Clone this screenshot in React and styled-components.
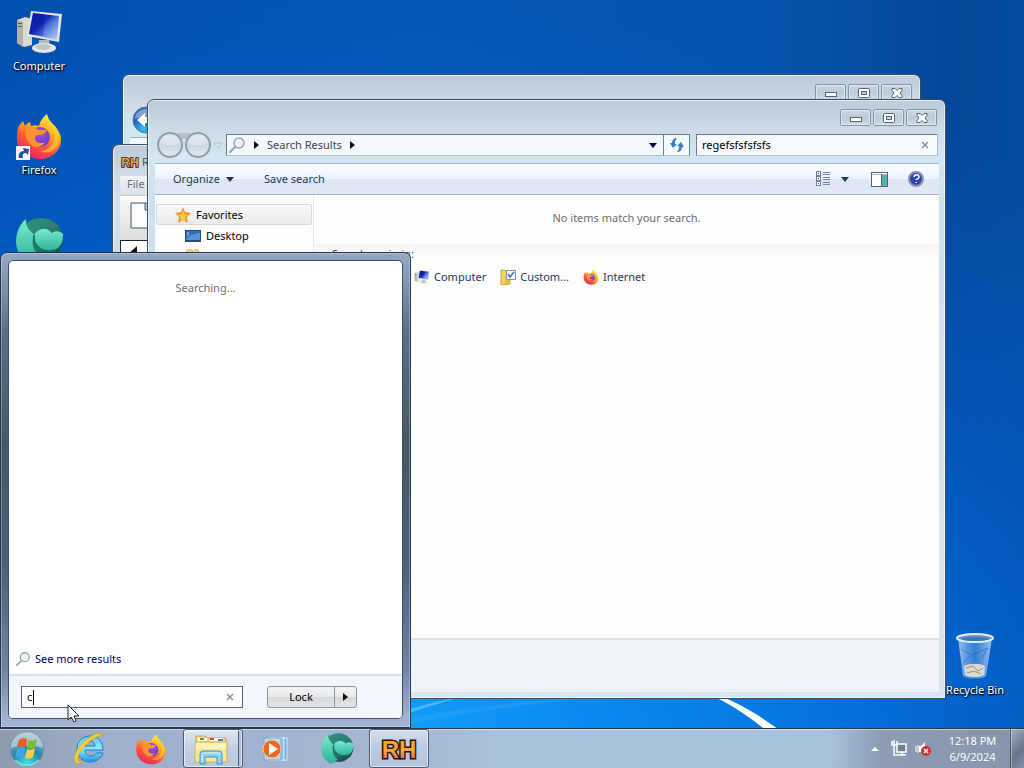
import { useState } from "react";
import styled, { createGlobalStyle } from "styled-components";

const App = () => {
  const [query, setQuery] = useState("regefsfsfsfsfs");
  const [startQuery, setStartQuery] = useState("c");

  return (
    <>
      <GlobalStyle />
      <Gradients />
      <Desktop>
        <Workspace>
          <Streaks />
          <Shortcuts>
            <Shortcut>
              <ComputerIcon size={48} />
              <span>Computer</span>
            </Shortcut>
            <Shortcut>
              <IconWithArrow>
                <FirefoxIcon size={48} />
                <ShortcutArrow />
              </IconWithArrow>
              <span>Firefox</span>
            </Shortcut>
            <Shortcut>
              <IconWithArrow>
                <GlobeIcon size={50} />
                <ShortcutArrow />
              </IconWithArrow>
            </Shortcut>
          </Shortcuts>
          <RecycleBin>
            <BinIcon />
            <span>Recycle Bin</span>
          </RecycleBin>

          <BackWindow aria-label="Explorer">
            <Caption>
              <CaptionButtons />
            </Caption>
            <BackNav>
              <BackOrb />
            </BackNav>
            <BackBody />
          </BackWindow>

          <HackerWindow aria-label="RH">
            <HackerTitle>
              <RHIcon width={20} height={16} />
              <span>R</span>
            </HackerTitle>
            <HackerMenu>File</HackerMenu>
            <HackerTools>
              <PageIcon />
            </HackerTools>
            <HackerCanvas>
              <ToolGlyph />
            </HackerCanvas>
          </HackerWindow>

          <FrontWindow aria-label="Search Results">
            <Caption>
              <CaptionButtons />
            </Caption>
            <AddressRow>
              <NavOrbs />
              <AddressBar>
                <SearchGlyph size={18} />
                <Triangle />
                <span>Search Results</span>
                <Triangle />
                <Spacer />
                <Triangle down />
              </AddressBar>
              <RefreshButton aria-label="Refresh">
                <RefreshIcon />
              </RefreshButton>
              <SearchBox>
                <input aria-label="Search" value={query} onChange={(e) => setQuery(e.target.value)} />
                <ClearButton aria-label="Clear" tone="#7b8ea8" onClick={() => setQuery("")}>
                  <Cross />
                </ClearButton>
              </SearchBox>
            </AddressRow>
            <Toolbar>
              <ToolButton>
                Organize <Triangle down tone="#1e395b" />
              </ToolButton>
              <ToolButton before={30}>Save search</ToolButton>
              <Spacer />
              <ToolButton aria-label="Change your view">
                <ViewIcon />
              </ToolButton>
              <ToolButton aria-label="More views" before={10}>
                <Triangle down tone="#1e395b" />
              </ToolButton>
              <ToolButton aria-label="Preview pane" before={22}>
                <PaneIcon />
              </ToolButton>
              <ToolButton aria-label="Help" before={20}>
                <HelpIcon />
              </ToolButton>
            </Toolbar>
            <Body>
              <Sidebar>
                <SideItem selected>
                  <StarIcon />
                  Favorites
                </SideItem>
                <SideItem nested>
                  <DesktopIcon />
                  Desktop
                </SideItem>
                <SideItem nested>
                  <FolderIcon />
                </SideItem>
              </Sidebar>
              <Results>
                <Empty>No items match your search.</Empty>
                <Again>
                  <p>Search again in:</p>
                  <Places>
                    <Place href="#computer">
                      <ComputerIcon size={16} />
                      Computer
                    </Place>
                    <Place href="#custom">
                      <CustomIcon />
                      Custom...
                    </Place>
                    <Place href="#internet">
                      <FirefoxIcon size={16} />
                      Internet
                    </Place>
                  </Places>
                </Again>
              </Results>
            </Body>
            <Details />
          </FrontWindow>

          <StartMenu>
            <StartPanel>
              <Searching>Searching...</Searching>
              <MoreResults href="#more">
                <SearchGlyph size={16} />
                See more results
              </MoreResults>
              <StartFooter>
                <StartSearch>
                  <input
                    aria-label="Search programs and files"
                    value={startQuery}
                    onChange={(e) => setStartQuery(e.target.value)}
                  />
                  {startQuery && <Caret />}
                  <ClearButton aria-label="Clear" tone="#8a8a8a" onClick={() => setStartQuery("")}>
                    <Cross />
                  </ClearButton>
                </StartSearch>
                <LockGroup>
                  <button>Lock</button>
                  <button aria-label="More options">
                    <Triangle />
                  </button>
                </LockGroup>
              </StartFooter>
            </StartPanel>
          </StartMenu>
          <Pointer />
        </Workspace>

        <Taskbar>
          <StartButton aria-label="Start">
            <OrbIcon />
          </StartButton>
          <Task aria-label="Internet Explorer">
            <IEIcon />
          </Task>
          <Task aria-label="Firefox">
            <FirefoxIcon size={32} />
          </Task>
          <Task aria-label="Windows Explorer" open stacked>
            <ExplorerIcon />
          </Task>
          <Task aria-label="Media Player">
            <PlayerIcon />
          </Task>
          <Task aria-label="Globe">
            <GlobeIcon size={34} />
          </Task>
          <Task aria-label="Resource Hacker" open>
            <RHIcon width={40} height={32} />
          </Task>
          <Spacer />
          <Tray>
            <TrayButton aria-label="Show hidden icons">
              <svg width="8" height="4"><path d="M0 4 4 0l4 4z" fill="#fff" /></svg>
            </TrayButton>
            <TrayButton aria-label="Network">
              <NetworkIcon />
            </TrayButton>
            <TrayButton aria-label="Volume">
              <VolumeIcon />
            </TrayButton>
            <Clock>
              <span>12:18 PM</span>
              <span>6/9/2024</span>
            </Clock>
            <ShowDesktop aria-label="Show desktop" />
          </Tray>
        </Taskbar>
      </Desktop>
    </>
  );
};

/* ---------- icons ---------- */

const Gradients = () => (
  <GradientsSvg width="0" height="0" aria-hidden="true">
    <defs>
      <linearGradient id="screen" x1="0" y1="0" x2="1" y2="1">
        <stop offset="0" stopColor="#0a1fb0" />
        <stop offset=".4" stopColor="#1226b8" />
        <stop offset=".55" stopColor="#4a70da" />
        <stop offset="1" stopColor="#c4dcfd" />
      </linearGradient>
      <linearGradient id="fox" x1=".8" y1="0" x2=".3" y2="1">
        <stop offset="0" stopColor="#fff14a" />
        <stop offset=".35" stopColor="#ffb21f" />
        <stop offset=".65" stopColor="#ff5a36" />
        <stop offset="1" stopColor="#ec1f65" />
      </linearGradient>
      <radialGradient id="foxCore" cx=".55" cy=".35" r=".7">
        <stop offset="0" stopColor="#a24be6" />
        <stop offset="1" stopColor="#5a3bc4" />
      </radialGradient>
      <linearGradient id="tealDark" x1="0" y1="0" x2="1" y2="1">
        <stop offset="0" stopColor="#2f9683" />
        <stop offset=".5" stopColor="#2c7f72" />
        <stop offset="1" stopColor="#0a3835" />
      </linearGradient>
      <linearGradient id="teal" x1="0" y1="0" x2="0" y2="1">
        <stop offset="0" stopColor="#7cecce" />
        <stop offset="1" stopColor="#2bb095" />
      </linearGradient>
      <linearGradient id="rh" x1="0" y1="0" x2="0" y2="1">
        <stop offset=".2" stopColor="#f2a91c" />
        <stop offset=".55" stopColor="#f6a83a" />
        <stop offset=".9" stopColor="#ee5f5a" />
      </linearGradient>
      <linearGradient id="bin" x1="0" y1="0" x2="1" y2="0">
        <stop offset="0" stopColor="#a9cdf3" stopOpacity=".9" />
        <stop offset=".5" stopColor="#4f92df" stopOpacity=".6" />
        <stop offset="1" stopColor="#b5d6f6" stopOpacity=".85" />
      </linearGradient>
      <radialGradient id="orb" cx=".5" cy=".9" r=".9">
        <stop offset="0" stopColor="#3fe0e8" />
        <stop offset=".45" stopColor="#2b86a8" />
        <stop offset="1" stopColor="#9fb4c0" />
      </radialGradient>
      <linearGradient id="ie" x1="0" y1="0" x2="0" y2="1">
        <stop offset="0" stopColor="#5cc8f6" />
        <stop offset=".5" stopColor="#8fe6ff" />
        <stop offset="1" stopColor="#1c93dc" />
      </linearGradient>
      <radialGradient id="blueOrb" cx=".4" cy=".85" r=".9">
        <stop offset="0" stopColor="#35c3f5" />
        <stop offset=".5" stopColor="#1d62b8" />
        <stop offset="1" stopColor="#3f6aae" />
      </radialGradient>
      <linearGradient id="paleOrb" x1="0" y1="0" x2="0" y2="1">
        <stop offset="0" stopColor="#d5dfe8" />
        <stop offset=".5" stopColor="#c9d5e0" />
        <stop offset="1" stopColor="#e2edf5" />
      </linearGradient>
    </defs>
  </GradientsSvg>
);

const ComputerIcon = ({ size }) => (
  <svg width={size} height={size} viewBox="0 0 48 48">
    <path d="M2 12 10 9l7 2v26l-8 2-7-4z" fill="#d9d8cf" />
    <path d="m2 12 6 2v25l-6-4z" fill="#b3b2a8" />
    <path d="M3 15h4v1H3zm0 3h4v1H3z" fill="#5b5b55" />
    <path d="M24 32h10l1 8H23z" fill="#b5b9bd" />
    <ellipse cx="29" cy="40" rx="12" ry="5" fill="#e6e6e1" />
    <ellipse cx="28" cy="39" rx="8" ry="3" fill="#c3c5c6" />
    <path d="m16 3 31 3-3 28-32-6z" fill="#e4e5e2" />
    <path d="m18 5 26 3-2 24-28-6z" fill="url(#screen)" />
    <path d="m18 5 12 1-2 22-14-2z" fill="#0c1696" opacity=".35" />
  </svg>
);

const FirefoxIcon = ({ size }) => (
  <svg width={size} height={size} viewBox="0 0 48 48">
    <path
      d="M3 16c1-3 3-5 5-7l2 5c1-2 3-3 5-4l1 4c3-1 6-1 8 0 1-5 4-9 8-12 1 5 4 8 8 12 4 5 6 9 6 13 0 12-9 20-21 20S2 38 2 27c0-4 0-8 1-11z"
      fill="url(#fox)"
    />
    <path d="M34 12c5 5 7 10 5 17-2 6-8 10-14 10 8 4 17-1 19-9 2-7-3-14-10-18z" fill="#ffd93a" opacity=".55" />
    <circle cx="25" cy="25" r="10" fill="url(#foxCore)" />
    <path d="M11 17c5-3 10-2 13 1h8c-2 4-5 5-9 5-3 1-4 3-2 6 2 2 6 3 9 1-3 6-11 7-15 2-3-3-5-8-4-15z" fill="#ff9130" />
  </svg>
);

const GlobeIcon = ({ size }) => (
  <svg width={size} height={size} viewBox="0 0 50 50">
    <ellipse cx="27" cy="23" rx="22" ry="21" fill="url(#tealDark)" />
    <path d="M2 26C2 16 6 8 12 3c0 7 4 12 9 16-5 7-2 16 5 21-3 3-6 5-10 7C8 42 2 36 2 26z" fill="url(#teal)" />
    <path d="M12 3c0 7 4 12 9 16" fill="none" stroke="#2a8c79" />
    <path d="M20 19c5-8 13-8 18-2 4-3 8-2 11 1 0 8-2 13-8 16-11 4-23-3-21-15z" fill="url(#teal)" />
    <path d="M20 19c-2 12 10 19 21 15" fill="none" stroke="#167262" strokeWidth="2" />
  </svg>
);

const ShortcutArrow = () => (
  <Badge width="14" height="14" viewBox="0 0 14 14">
    <rect width="14" height="14" fill="#f4f7fb" />
    <path d="M3 12C2 8 4 5 8 5L7 2l6 1-1 6-2-2c-3 0-4 2-3 5z" fill="#23509c" />
  </Badge>
);

const BinIcon = () => (
  <svg width="48" height="48" viewBox="0 0 48 48">
    <path d="m7 6 5 38c6 4 18 4 23 0l6-38z" fill="url(#bin)" />
    <path d="M13 34c6-3 16-3 21 0l-1 9c-5 3-14 3-19 0z" fill="#dcdad0" />
    <path d="m15 36 7-2 5 5 5-3M16 41l7-2 7 3" stroke="#96938a" fill="none" />
    <path d="m10 17 10 6-8 8m9-8 16-7-6 10" stroke="#2263ae" fill="none" opacity=".6" />
    <ellipse cx="24" cy="6" rx="18" ry="4" fill="#6d93bd" stroke="#e6eef6" strokeWidth="2" />
    <ellipse cx="24" cy="7" rx="14" ry="2" fill="#3a78be" />
  </svg>
);

const RHIcon = ({ width, height }) => (
  <svg width={width} height={height} viewBox="0 0 40 32" aria-hidden="true">
    <RHText x="20" y="25" textAnchor="middle">RH</RHText>
  </svg>
);

const PageIcon = () => (
  <svg width="24" height="28" viewBox="0 0 24 28">
    <path d="M1 1h15l6 7v18H1z" fill="#fbfdff" stroke="#35566f" />
    <path d="M15 1v7h7" fill="#b6d5e8" stroke="#35566f" />
  </svg>
);

const ToolGlyph = () => (
  <svg width="20" height="14" viewBox="0 0 20 14">
    <path d="m7 13 9-8v8l-3-1-1 2H9l1-3z" fill="#111" />
  </svg>
);

const BackOrb = () => (
  <svg width="28" height="28" viewBox="0 0 28 28">
    <circle cx="14" cy="14" r="13" fill="url(#blueOrb)" stroke="#5478a6" />
    <path d="M3 13a11 10 0 0 1 22 0c-7-3-15-3-22 0z" fill="#fff" opacity=".4" />
    <path d="m5 14 8-7v4h9v6h-9v4z" fill="#fff" />
  </svg>
);

const NavOrbs = () => (
  <svg width="70" height="28" viewBox="0 0 70 28">
    <path d="M15 2h27l-5 6H20z" fill="#b5c3d0" />
    <circle cx="14" cy="14" r="12" fill="url(#paleOrb)" stroke="#939eaa" strokeWidth="2" />
    <circle cx="42" cy="14" r="12" fill="url(#paleOrb)" stroke="#939eaa" strokeWidth="2" />
    <path d="M4 12a10 9 0 0 1 20 0c-6 3-14 3-20 0zm28 0a10 9 0 0 1 20 0c-6 3-14 3-20 0z" fill="#fff" opacity=".3" />
    <path d="M58 12h8l-4 5z" fill="#dde7ef" stroke="#b3c0cc" />
  </svg>
);

const SearchGlyph = ({ size }) => (
  <svg width={size} height={size} viewBox="0 0 18 18">
    <path d="m2 16 5-5" stroke="#9aa5b2" strokeWidth="2" strokeLinecap="round" />
    <circle cx="11" cy="7" r="5" fill="#e9f3fb" stroke="#9aa5b2" strokeWidth="1.5" />
  </svg>
);

const RefreshIcon = () => (
  <svg width="16" height="16" viewBox="0 0 16 16" fill="#3b7fc0">
    <path d="M8 1C5 1 3 3 3 6H1l3 5 4-4H6c0-2 0-4 2-6z" />
    <path d="M8 15c3 0 5-2 5-5h2l-3-5-4 4h2c0 2 0 4-2 6z" />
  </svg>
);

const Cross = () => (
  <svg width="8" height="8" viewBox="0 0 8 8">
    <path d="m1 1 6 6m0-6L1 7" stroke="currentColor" strokeWidth="1.4" />
  </svg>
);

const ViewIcon = () => (
  <svg width="16" height="16" viewBox="0 0 16 16">
    {[1, 6, 11].map((y) => (
      <g key={y}>
        <rect x="1.5" y={y - 0.5} width="4" height="4" fill="#fff" stroke="#6d7f93" />
        <path d={`M3 ${y + 1.5}h1`} stroke="#235" />
        <path d={`M8 ${y + 0.5}h7M8 ${y + 2.5}h7`} stroke="#6a86b4" />
      </g>
    ))}
  </svg>
);

const PaneIcon = () => (
  <svg width="17" height="15" viewBox="0 0 17 15">
    <rect x=".5" y=".5" width="16" height="14" fill="#fff" stroke="#4d6582" />
    <path d="M1 2.5h15" stroke="#a9b9ca" />
    <rect x="11" y="3" width="5" height="11" fill="#54b3ae" />
    <path d="M10.5 2v12" stroke="#4d6582" />
  </svg>
);

const HelpIcon = () => (
  <svg width="16" height="16" viewBox="0 0 16 16">
    <circle cx="8" cy="8" r="7" fill="#2c46ad" stroke="#8796b4" strokeWidth="2" />
    <path d="M6 6c0-3 5-3 5 0 0 2-3 2-3 3m0 2v1" fill="none" stroke="#fff" strokeWidth="1.5" />
  </svg>
);

const StarIcon = () => (
  <svg width="16" height="16" viewBox="0 0 16 16">
    <path d="m8 0 2 5 6 1-4 4 1 6-5-3-5 3 1-6-4-4 6-1z" fill="#f9951d" />
    <path d="m8 3 1 4 4 1-3 2 1 4-3-2-3 2 1-4-3-2 4-1z" fill="#ffcf55" />
  </svg>
);

const DesktopIcon = () => (
  <svg width="16" height="12" viewBox="0 0 16 12">
    <rect width="16" height="12" fill="#24497f" />
    <rect x="1" y="1" width="14" height="9" fill="#2e6cba" />
    <path d="M1 10c3-5 9-7 14-7v7z" fill="#5693d8" />
    <path d="M2 3h2M2 5h2" stroke="#b9d5f2" />
  </svg>
);

const FolderIcon = () => (
  <svg width="16" height="16" viewBox="0 0 16 16">
    <path d="M2 1h5l1 2h6v12H2z" fill="#f7e08a" stroke="#d6a92a" />
    <path d="M9 1h4v5" fill="#fff3b8" stroke="#d6a92a" />
  </svg>
);

const CustomIcon = () => (
  <svg width="16" height="16" viewBox="0 0 16 16">
    <path d="M1 1h4l1 2h4v12l-9 1z" fill="#f2d46a" stroke="#c9a233" />
    <rect x="6.5" y="1.5" width="9" height="9" fill="#fff" stroke="#7e94b4" />
    <path d="m8 5 2 3 4-5" fill="none" stroke="#3b6fc0" strokeWidth="1.5" />
    <path d="M5 6v10l5-3v-2H7z" fill="#e3bb45" />
  </svg>
);

const OrbIcon = () => (
  <svg width="40" height="38" viewBox="0 0 40 38">
    <circle cx="20" cy="19" r="17" fill="url(#orb)" stroke="#7c99a3" />
    <path d="M4 18a16 16 0 0 1 32 0c-9-3-22-3-32 0z" fill="#e2ebec" opacity=".5" />
    <path d="M12 10c3-2 5-2 8-1l-1 8c-3-1-6-1-9 1z" fill="#ea5a2a" />
    <path d="M21 10c3 1 6 1 9-1l-2 8c-3 2-5 2-8 1z" fill="#7fb93a" />
    <path d="M10 19c3-2 5-2 8-1l-1 9c-3-1-6-1-9 1z" fill="#3ba8e8" />
    <path d="M20 19c3 1 5 1 8-1l-2 9c-3 2-5 2-8 1z" fill="#fbd03c" />
    <path d="M8 30c7 7 17 7 24 0" stroke="#7df3ee" strokeWidth="2" fill="none" opacity=".7" />
  </svg>
);

const IEIcon = () => (
  <svg width="34" height="34" viewBox="0 0 34 34">
    <path
      fillRule="evenodd"
      d="M18 4c7 0 13 5 13 14H13c0 4 2 6 6 6 2 0 4-1 5-3h7c-2 6-7 9-13 9C11 30 5 25 5 17S11 4 18 4zm0 5c-3 0-5 2-5 5h10c0-3-2-5-5-5z"
      fill="url(#ie)"
      stroke="#1784c7"
    />
    <path
      d="M31 3c-3-3-10-1-16 4C6 14 0 25 3 30c2 3 6 1 9-1-4 1-6 1-6-2 0-5 5-12 11-17 5-4 11-7 14-7z"
      fill="#f7cd3b"
      stroke="#c89a1c"
      strokeWidth=".6"
    />
  </svg>
);

const ExplorerIcon = () => (
  <svg width="36" height="34" viewBox="0 0 36 34">
    <path d="M3 4h9l2 2h19v6H3z" fill="#f0dc8c" stroke="#c3a546" />
    <path d="M5 6h9v3H5zm12 0h13v3H17z" fill="#fff" />
    <path d="M7 6h4v2H7z" fill="#43a047" />
    <path d="M17 6h4v2h-4z" fill="#d84332" />
    <path d="M25 7h5v2h-5z" fill="#3f7fd0" />
    <path d="M2 10h32v20H2z" fill="#f8e697" stroke="#d2b654" />
    <path d="M3 11h30v6H3z" fill="#fdf3bd" />
    <path d="M7 32V22q0-3 3-3h16q3 0 3 3v10h-5v-7H12v7z" fill="#8fd0f2" stroke="#3f93cc" />
    <path d="M9 30v-7q0-2 2-2h14q2 0 2 2" fill="none" stroke="#e4f6ff" />
  </svg>
);

const PlayerIcon = () => (
  <svg width="28" height="28" viewBox="0 0 28 28">
    <rect x="10" y="3" width="16" height="22" fill="#6ea9dc" stroke="#d7ecfb" />
    <rect x="7" y="3" width="16" height="22" fill="#8fc3ec" stroke="#e8f5ff" />
    <rect x="3" y="3" width="17" height="22" fill="#b5daf5" stroke="#6fa5cf" />
    <circle cx="11" cy="14" r="9" fill="#ea6b1c" stroke="#f7c39a" />
    <path d="M8 8v12l9-6z" fill="#fff" />
  </svg>
);

const NetworkIcon = () => (
  <svg width="17" height="17" viewBox="0 0 17 17" fill="none" stroke="#fff">
    <rect x="6" y="4" width="9" height="8" fill="#6f7f92" strokeWidth="1.5" />
    <path d="M7 15h8M11 12v3M1 1v4h5V1M3 0v4M3 5v10h4" strokeWidth="1.5" />
  </svg>
);

const VolumeIcon = () => (
  <svg width="17" height="17" viewBox="0 0 17 17">
    <path d="M1 6v6M3 5v8" stroke="#fff" />
    <path d="M4 6h2l4-4v14l-4-4H4z" fill="#fff" />
    <circle cx="11" cy="11" r="5" fill="#d92b2b" />
    <path d="m9 9 4 4m0-4-4 4" stroke="#fff" strokeWidth="1.5" />
  </svg>
);

const Pointer = () => (
  <PointerSvg width="13" height="19" viewBox="0 0 13 19">
    <path d="M1 1v15l3-3 3 5 2-1-2-5h5z" fill="#fff" stroke="#222" />
  </PointerSvg>
);

const Streaks = () => (
  <StreaksSvg viewBox="0 0 1024 728" preserveAspectRatio="none">
    <path d="M400 712q30-10 62-15-30 8-62 19z" fill="#9adcff" opacity=".45" />
    <path d="M400 720q90-19 210-24-110 10-210 30z" fill="#6cc4ff" opacity=".15" />
    <path d="M700 690c30 7 55 22 82 42h-14c-22-18-40-30-68-42z" fill="#fff" />
  </StreaksSvg>
);

const CaptionButtons = () => (
  <>
    <CaptionButton aria-label="Minimize">
      <svg width="12" height="10">
        <rect x=".5" y="4.5" width="11" height="4" fill="#fff" stroke="#566373" />
      </svg>
    </CaptionButton>
    <CaptionButton aria-label="Maximize">
      <svg width="12" height="10">
        <rect x=".5" y=".5" width="11" height="9" rx="1" fill="#fff" stroke="#566373" />
        <rect x="3.5" y="3.5" width="5" height="3" fill="#c5d2df" stroke="#566373" />
      </svg>
    </CaptionButton>
    <CaptionButton aria-label="Close">
      <svg width="12" height="10">
        <path d="M1 .5h3l2 2 2-2h3v2L9 5l2 2.500v2H8l-2-2-2 2H1v-2L3 5 1 2.500z" fill="#fff" stroke="#566373" />
      </svg>
    </CaptionButton>
  </>
);

/* ---------- styles ---------- */

const GlobalStyle = createGlobalStyle`
  * {
    box-sizing: border-box;
  }
  body {
    margin: 0;
    font-family: "Noto Sans", "Open Sans", sans-serif;
    font-size: 11px;
    line-height: 16px;
    color: #000;
  }
  button, input {
    font: inherit;
    color: inherit;
    margin: 0;
    padding: 0;
    border: none;
    outline: none;
    background: transparent;
  }
  a {
    color: inherit;
    text-decoration: none;
  }
  p {
    margin: 0;
  }
  svg {
    display: block;
    flex-shrink: 0;
  }
`;

const GradientsSvg = styled.svg`
  position: absolute;
`;

const Desktop = styled.div`
  display: flex;
  flex-direction: column;
  min-height: 100vh;
  overflow: hidden;
  background:
    radial-gradient(ellipse 105% 100% at 34% 100%, #14a4fb 0%, #0b8cf2 22%, rgba(4, 116, 228, 0.85) 48%, rgba(3, 98, 210, 0.5) 72%, transparent 100%),
    linear-gradient(90deg, #0350b0 0%, #0458b4 40%, #0654ae 75%, #05479a 92%, #054c9e 100%);
`;

const Workspace = styled.main`
  position: relative;
  flex: 1;
`;

const StreaksSvg = styled.svg`
  position: absolute;
  inset: 0;
  width: 100%;
  height: 100%;
`;

const Shortcuts = styled.div`
  display: flex;
  flex-direction: column;
  gap: 32px;
  width: 78px;
  padding-top: 8px;
`;

const Shortcut = styled.div`
  position: relative;
  display: flex;
  flex-direction: column;
  align-items: center;
  gap: 2px;
  min-height: 72px;
  color: #fff;
  text-shadow: 1px 1px 2px #000, 0 1px 2px #000;
  white-space: nowrap;
`;

const IconWithArrow = styled.div`
  position: relative;
`;

const Badge = styled.svg`
  position: absolute;
  left: 1px;
  bottom: 0;
`;

const RecycleBin = styled(Shortcut)`
  position: absolute;
  right: 10px;
  bottom: 24px;
  width: 78px;
`;

const Window = styled.section`
  position: absolute;
  display: flex;
  flex-direction: column;
  padding: 0 6px 6px 7px;
  border: 1px solid #3f4c5c;
  border-radius: 7px 7px 0 0;
  background: linear-gradient(180deg, #bccbda 0, #cddae5 28px, #d2e6f3 56px, #cfdfed 100px, #dbe5ee 100%);
  box-shadow: inset 0 0 0 1px rgba(255, 255, 255, 0.6);
`;

const FrontWindow = styled(Window)`
  top: 99px;
  left: 147px;
  right: 78px;
  bottom: 29px;
`;

const BackWindow = styled(Window)`
  top: 74px;
  left: 122px;
  right: 103px;
  bottom: 55px;
`;

const HackerWindow = styled(Window)`
  top: 144px;
  left: 112px;
  width: 420px;
  bottom: 120px;
`;

const Caption = styled.header`
  display: flex;
  justify-content: flex-end;
  gap: 2px;
  height: 34px;
  padding: 9px 2px 0 0;
`;

const CaptionButton = styled.button`
  display: flex;
  align-items: center;
  justify-content: center;
  width: 31px;
  height: 17px;
  border: 1px solid #8494a6;
  border-radius: 2px;
  background: linear-gradient(180deg, #cbd8e4 0%, #bccbd9 50%, #cddbe6 100%);
  box-shadow: inset 0 0 0 1px rgba(255, 255, 255, 0.45);
`;

const BackNav = styled.div`
  display: flex;
  padding: 0 0 3px 2px;
  margin-top: -3px;
`;

const BackBody = styled.div`
  flex: 1;
  border-top: 1px solid #9fb0c2;
  background: #f4f8fc;
`;

const HackerTitle = styled.div`
  display: flex;
  align-items: center;
  gap: 2px;
  height: 31px;
  padding-top: 3px;
  color: #555;
`;

const HackerMenu = styled.div`
  height: 19px;
  padding-left: 7px;
  background: linear-gradient(180deg, #f2f5f9, #d9e0ea);
  color: #6d6d6d;
`;

const HackerTools = styled.div`
  height: 45px;
  padding: 6px 10px;
  border-top: 1px solid #c5c9cf;
  background: linear-gradient(180deg, #fbfbfb, #dcdcdc);
`;

const HackerCanvas = styled.div`
  flex: 1;
  border: 1px solid #222;
  background: #fff;
`;

const AddressRow = styled.div`
  display: flex;
  align-items: center;
  height: 22px;
  padding: 0 1px;
`;

const AddressBar = styled.div`
  display: flex;
  align-items: center;
  gap: 8px;
  flex: 1;
  height: 22px;
  padding: 0 6px 0 1px;
  border: 1px solid #6b7d90;
  border-bottom-color: #aebccb;
  background: #f2f8fd;
  color: #3c4650;
`;

const RefreshButton = styled.button`
  display: flex;
  align-items: center;
  justify-content: center;
  width: 26px;
  height: 22px;
  margin-right: 6px;
  border: 1px solid #6b7d90;
  border-left: none;
  border-bottom-color: #aebccb;
  background: #f4f9fd;
`;

const SearchBox = styled.div`
  display: flex;
  align-items: center;
  width: 242px;
  height: 22px;
  padding: 0 4px 0 5px;
  border: 1px solid #6b7d90;
  border-color: #6b7d90 #aebccb #aebccb #6b7d90;
  background: #f6fafe;

  input {
    flex: 1;
    min-width: 0;
  }
`;

const ClearButton = styled.button`
  display: flex;
  align-items: center;
  justify-content: center;
  width: 16px;
  height: 16px;
  color: ${(props) => props.tone};
`;

const Triangle = styled.i`
  width: 0;
  height: 0;
  border: 4px solid transparent;
  ${(props) =>
    props.down
      ? `border-width: 5px 4px 0; border-top-color: ${props.tone || "#000040"};`
      : `border-width: 4px 0 4px 5px; border-left-color: ${props.tone || "#111"};`}
`;

const Spacer = styled.div`
  flex: 1;
`;

const Toolbar = styled.div`
  display: flex;
  align-items: center;
  height: 32px;
  margin-top: 7px;
  padding: 0 15px 0 18px;
  border-top: 1px solid #9fb6c9;
  border-bottom: 1px solid #9fafc4;
  background: linear-gradient(180deg, #fbfdff 0%, #eef4fc 48%, #dde6f3 52%, #dfe8f4 100%);
`;

const ToolButton = styled.button`
  display: flex;
  align-items: center;
  gap: 6px;
  margin-left: ${(props) => props.before || 0}px;
  color: #1e395b;
`;

const Body = styled.div`
  display: flex;
  flex: 1;
  min-height: 0;
  background: #fdfdfe;
`;

const Sidebar = styled.nav`
  width: 159px;
  padding: 9px 1px 0 1px;
  border-right: 1px solid #e4e7ee;
`;

const SideItem = styled.div`
  display: flex;
  align-items: center;
  gap: 5px;
  height: 21px;
  padding-left: ${(props) => (props.nested ? 28 : 18)}px;
  border: 1px solid ${(props) => (props.selected ? "#d9d9d9" : "transparent")};
  border-radius: 2px;
  background: ${(props) => (props.selected ? "linear-gradient(180deg, #fafafa, #ebebeb)" : "none")};
`;

const Results = styled.div`
  flex: 1;
`;

const Empty = styled.p`
  padding: 15px 0 18px;
  color: #6d6d6d;
  text-align: center;
`;

const Again = styled.div`
  padding: 2px 18px;
  background: linear-gradient(180deg, #f5f5f5, #fdfdfe 14px);
  color: #444;
`;

const Places = styled.div`
  display: flex;
  gap: 14px;
  padding: 7px 0 0 82px;
`;

const Place = styled.a`
  display: flex;
  align-items: center;
  gap: 4px;
  color: #1e395b;
`;

const Details = styled.footer`
  height: 54px;
  border-top: 2px solid #d8e4ec;
  background: #eff4fa;
`;

const StartMenu = styled.section`
  position: absolute;
  left: 0;
  bottom: 0;
  display: flex;
  width: 411px;
  height: 476px;
  padding: 7px 7px 8px;
  border: 1px solid #26364f;
  border-radius: 7px 7px 0 0;
  background: linear-gradient(180deg, #94a8c4 0%, #8196b2 6%, #5b7089 16%, #465862 40%, #4c5f78 65%, #6f84a6 88%, #a1b3d0 98%);
  box-shadow: inset 0 0 0 1px rgba(255, 255, 255, 0.3);
`;

const StartPanel = styled.div`
  flex: 1;
  display: flex;
  flex-direction: column;
  border: 1px solid #3e4f66;
  border-radius: 5px;
  background: #fff;
  overflow: hidden;
`;

const Searching = styled.p`
  flex: 1;
  padding-top: 19px;
  color: #6d6d6d;
  text-align: center;
`;

const MoreResults = styled.a`
  display: flex;
  align-items: center;
  gap: 4px;
  padding: 0 6px 7px;
  color: #000066;
`;

const StartFooter = styled.div`
  display: flex;
  align-items: center;
  gap: 24px;
  height: 44px;
  padding: 0 12px;
  border-top: 2px solid #d9e2f4;
  background: #f1f5fc;
`;

const StartSearch = styled.div`
  position: relative;
  display: flex;
  align-items: center;
  width: 222px;
  height: 22px;
  padding: 0 4px 0 5px;
  border: 1px solid #5a6370;
  background: #fff;

  input {
    flex: 1;
    min-width: 0;
  }
`;

const Caret = styled.i`
  position: absolute;
  left: 11px;
  width: 1px;
  height: 15px;
  background: #000;
`;

const LockGroup = styled.div`
  display: flex;
  height: 22px;
  border: 1px solid #8e959f;
  border-radius: 3px;
  background: linear-gradient(180deg, #f4f5f6 0%, #e9eaec 48%, #d6d9dc 52%, #e2e4e6 100%);

  button {
    display: flex;
    align-items: center;
    justify-content: center;
    width: 66px;
  }
  button + button {
    width: 22px;
    border-left: 1px solid #8e959f;
  }
`;

const PointerSvg = styled.svg`
  position: absolute;
  left: 67px;
  bottom: 5px;
`;

const Taskbar = styled.footer`
  display: flex;
  gap: 2px;
  height: 40px;
  border-top: 1px solid #2c3a4e;
  background: linear-gradient(90deg, #8d99ad 0, #98a6bd 50px, #9fb0cd 120px, #a3b6d3 400px, #a9c2df 500px, #a8c1df 81%, #8b9cb3 86%, #8795aa 100%);
  box-shadow: inset 0 1px 0 rgba(255, 255, 255, 0.45);
`;

const StartButton = styled.button`
  display: flex;
  align-items: center;
  justify-content: center;
  width: 57px;
  padding-right: 3px;
`;

const Task = styled.button`
  display: flex;
  align-items: center;
  justify-content: center;
  width: 60px;
  border-radius: 3px;
  ${(props) =>
    props.open &&
    `
    border: 1px solid #4b5b73;
    background: linear-gradient(180deg, #d3dcea 0%, #bac9df 50%, #b3c4dc 100%);
    box-shadow: inset 0 0 0 1px rgba(255, 255, 255, 0.6);
  `}
  ${(props) =>
    props.stacked &&
    `
    padding-right: 4px;
    background: linear-gradient(270deg, #b4c3d9 0, #b4c3d9 3px, #4b5b73 3px, #4b5b73 4px, transparent 4px),
      linear-gradient(180deg, #dfe6f0 0%, #c3cfe2 50%, #b9c8df 100%);
  `}
`;

const Tray = styled.div`
  display: flex;
  align-items: center;
  color: #fff;
`;

const TrayButton = styled.button`
  display: flex;
  align-items: center;
  justify-content: center;
  width: 24px;
  height: 24px;
`;

const Clock = styled.div`
  display: flex;
  flex-direction: column;
  align-items: center;
  width: 75px;
  padding-top: 1px;
`;

const ShowDesktop = styled.button`
  align-self: stretch;
  width: 14px;
  border-left: 1px solid #4c5a6d;
  background: linear-gradient(135deg, #a3b0c2, #66758a 60%, #8492a6);
  box-shadow: inset 1px 1px 0 rgba(255, 255, 255, 0.35);
`;

const RHText = styled.text`
  font-family: "Liberation Sans", sans-serif;
  font-size: 24px;
  font-weight: 700;
  fill: url(#rh);
  stroke: #2a1208;
  stroke-width: 3px;
  paint-order: stroke;
`;

export default App;
